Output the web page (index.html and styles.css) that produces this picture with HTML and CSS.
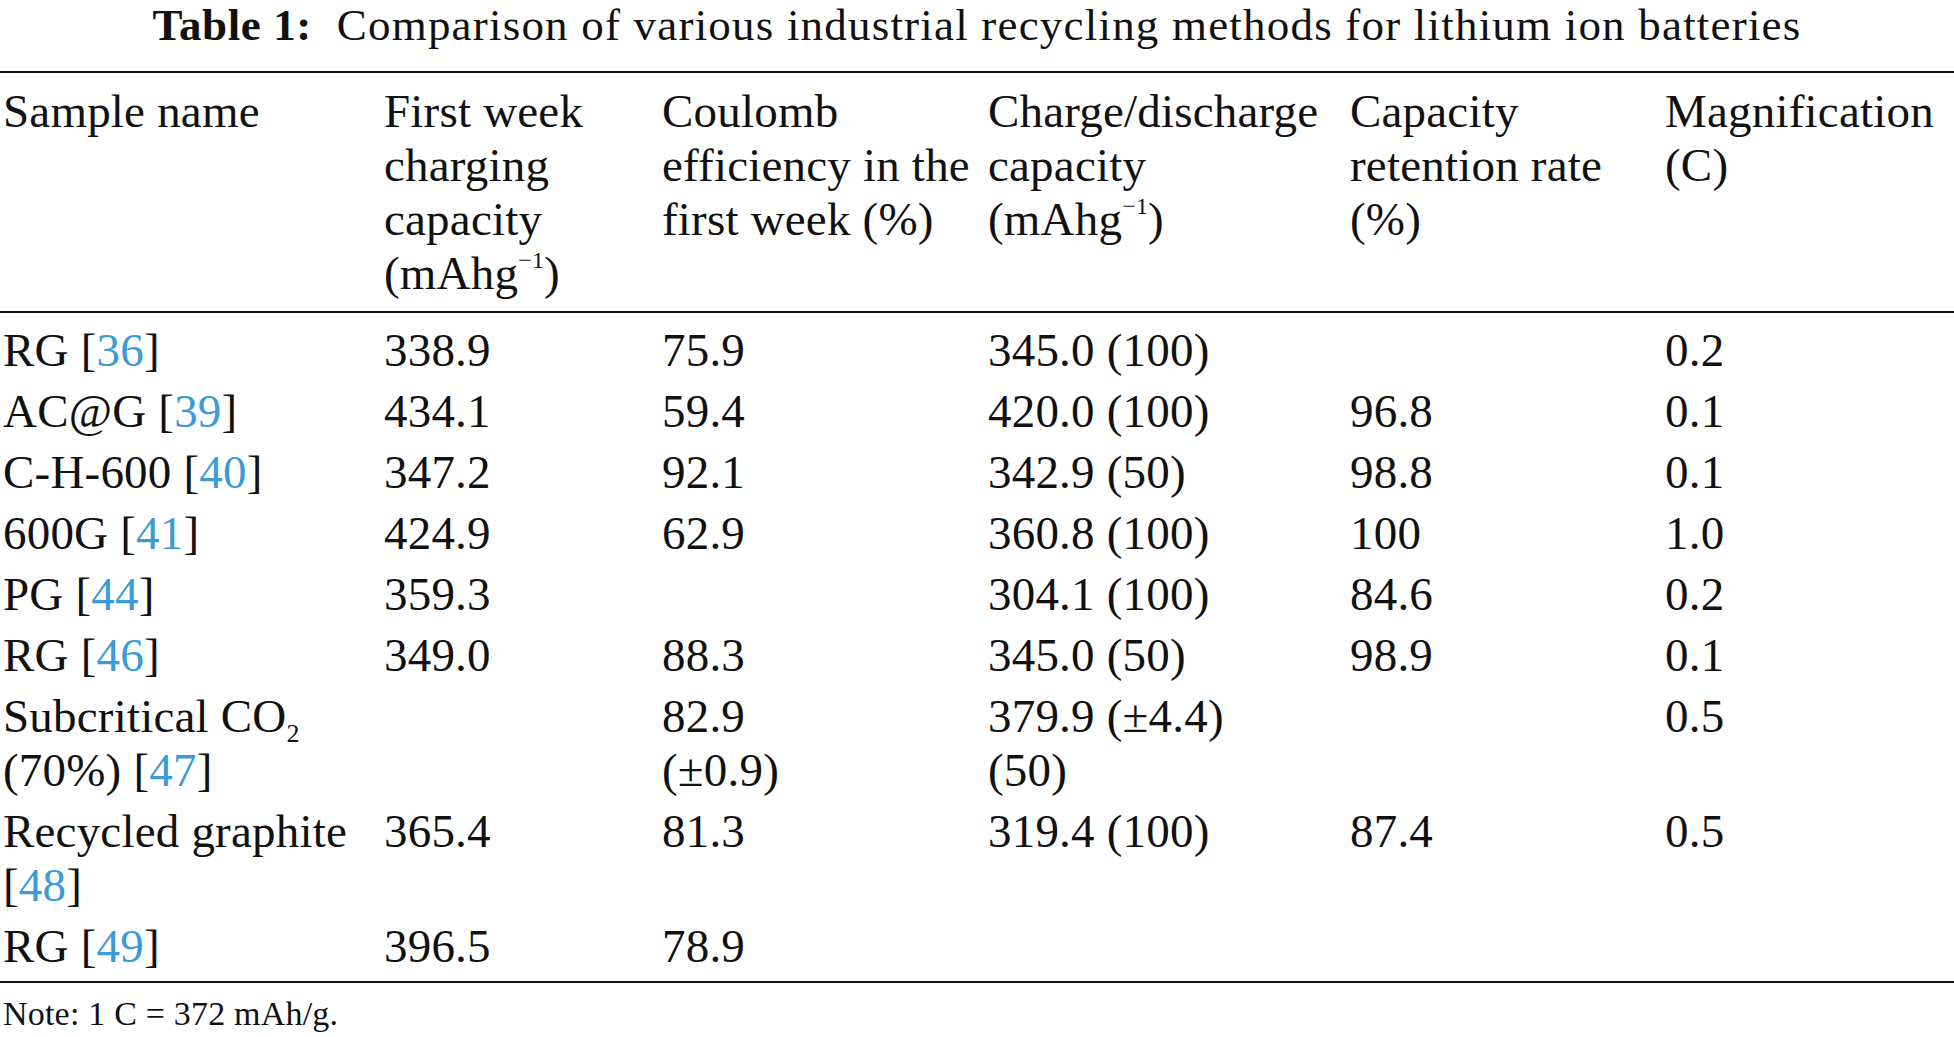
FILE: index.html
```html
<!DOCTYPE html>
<html lang="en">
<head>
<meta charset="utf-8">
<title>Table 1</title>
<link rel="stylesheet" href="styles.css">
</head>
<body>
<div class="page">
  <div class="caption"><span class="label">Table 1:</span>&nbsp; Comparison of various industrial recycling methods for lithium ion batteries</div>
  <table class="data">
    <colgroup>
      <col class="c1"><col class="c2"><col class="c3"><col class="c4"><col class="c5"><col class="c6">
    </colgroup>
    <thead>
      <tr>
        <th>Sample name</th>
        <th>First week<br>charging<br>capacity<br>(mAhg<sup>−1</sup>)</th>
        <th>Coulomb<br>efficiency in the<br>first week (%)</th>
        <th>Charge/discharge<br>capacity<br>(mAhg<sup>−1</sup>)</th>
        <th>Capacity<br>retention rate<br>(%)</th>
        <th>Magnification<br>(C)</th>
      </tr>
    </thead>
    <tbody>
      <tr><td>RG [<a class="ref">36</a>]</td><td>338.9</td><td>75.9</td><td>345.0 (100)</td><td></td><td>0.2</td></tr>
      <tr><td>AC@G [<a class="ref">39</a>]</td><td>434.1</td><td>59.4</td><td>420.0 (100)</td><td>96.8</td><td>0.1</td></tr>
      <tr><td>C-H-600 [<a class="ref">40</a>]</td><td>347.2</td><td>92.1</td><td>342.9 (50)</td><td>98.8</td><td>0.1</td></tr>
      <tr><td>600G [<a class="ref">41</a>]</td><td>424.9</td><td>62.9</td><td>360.8 (100)</td><td>100</td><td>1.0</td></tr>
      <tr><td>PG [<a class="ref">44</a>]</td><td>359.3</td><td></td><td>304.1 (100)</td><td>84.6</td><td>0.2</td></tr>
      <tr><td>RG [<a class="ref">46</a>]</td><td>349.0</td><td>88.3</td><td>345.0 (50)</td><td>98.9</td><td>0.1</td></tr>
      <tr><td>Subcritical CO<sub>2</sub><br>(70%) [<a class="ref">47</a>]</td><td></td><td>82.9<br>(±0.9)</td><td>379.9 (±4.4)<br>(50)</td><td></td><td>0.5</td></tr>
      <tr><td>Recycled graphite<br>[<a class="ref">48</a>]</td><td>365.4</td><td>81.3</td><td>319.4 (100)</td><td>87.4</td><td>0.5</td></tr>
      <tr><td>RG [<a class="ref">49</a>]</td><td>396.5</td><td>78.9</td><td></td><td></td><td></td></tr>
    </tbody>
  </table>
  <div class="note">Note: 1 C = 372 mAh/g.</div>
</div>
</body>
</html>
```

FILE: styles.css
```css
html, body {
  margin: 0;
  padding: 0;
  background: #ffffff;
}

.page {
  width: 1954px;
  font-family: "Liberation Serif", "Times New Roman", serif;
  color: #111111;
}

.caption {
  text-align: center;
  font-size: 45px;
  line-height: 50px;
  height: 50px;
  letter-spacing: 1.2px;
  white-space: nowrap;
}

.caption .label {
  font-weight: bold;
  letter-spacing: 0.6px;
}

.data {
  width: 1954px;
  border-collapse: collapse;
  table-layout: fixed;
  margin-top: 21px;
  font-size: 47px;
  line-height: 54px;
  letter-spacing: 0.2px;
}

.c1 { width: 384px; }
.c2 { width: 278px; }
.c3 { width: 326px; }
.c4 { width: 362px; }
.c5 { width: 315px; }
.c6 { width: 289px; }

.data thead tr {
  border-top: 2px solid #111111;
  border-bottom: 2px solid #111111;
}

.data th {
  font-weight: normal;
  text-align: left;
  vertical-align: top;
  padding: 11px 0 11px 0;
  white-space: nowrap;
}

.data td {
  text-align: left;
  vertical-align: top;
  padding: 3.5px 0 3.5px 0;
  white-space: nowrap;
}

.data th:first-child,
.data td:first-child {
  padding-left: 3px;
}

.data tbody tr:first-child td {
  padding-top: 10px;
}

.data tbody tr:last-child td {
  padding-bottom: 8px;
}

.data tbody tr:last-child {
  border-bottom: 2px solid #111111;
}

.ref {
  color: #3b9bd6;
  text-decoration: none;
}

sup {
  font-size: 24px;
  line-height: 0;
  vertical-align: 21px;
}

sub {
  font-size: 26px;
  line-height: 0;
  vertical-align: -10px;
}

.note {
  font-size: 34px;
  line-height: 40px;
  padding: 11px 0 0 3px;
  letter-spacing: 0.2px;
}
```
